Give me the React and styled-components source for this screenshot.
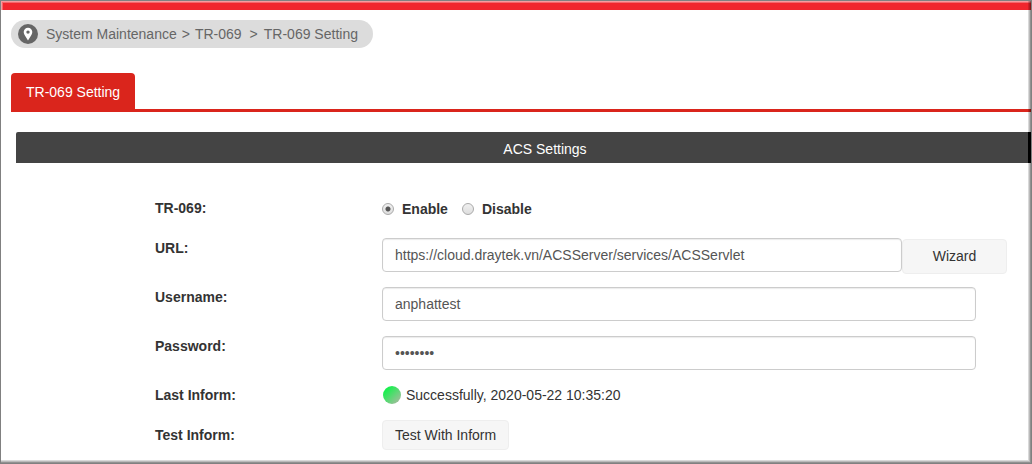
import React from "react";
import styled, { createGlobalStyle } from "styled-components";

const COLORS = {
  banner: "#f1262d",
  primary: "#da251c",
  heading: "#444444",
  crumb: "#dcdcdc",
  crumbText: "#666666",
  text: "#333333",
  fieldText: "#555555",
  border: "#cccccc",
  button: "#f6f6f6",
  buttonBorder: "#eeeeee",
};

const App = () => (
  <Window>
    <GlobalStyle />
    <Banner />
    <Content>
      <Breadcrumb aria-label="Breadcrumb">
        <PinIcon />
        <Crumb href="#maintenance">System Maintenance</Crumb>
        <Separator>&gt;</Separator>
        <Crumb href="#tr069">TR-069</Crumb>
        <Separator $wide>&gt;</Separator>
        <Crumb href="#setting">TR-069 Setting</Crumb>
      </Breadcrumb>

      <Tabs>
        <Tab type="button">TR-069 Setting</Tab>
      </Tabs>

      <Panel>
        <PanelTitle>ACS Settings</PanelTitle>
        <Form onSubmit={(event) => event.preventDefault()}>
          <RadioRow role="radiogroup" aria-labelledby="tr069-label">
            <Label as="span" id="tr069-label">
              TR-069:
            </Label>
            <RadioGroup>
              <RadioLabel>
                <Radio type="radio" name="tr069" defaultChecked />
                Enable
              </RadioLabel>
              <RadioLabel>
                <Radio type="radio" name="tr069" />
                Disable
              </RadioLabel>
            </RadioGroup>
          </RadioRow>

          <Row>
            <Label htmlFor="url">URL:</Label>
            <UrlGroup>
              <Input
                id="url"
                type="text"
                defaultValue="https://cloud.draytek.vn/ACSServer/services/ACSServlet"
              />
              <WizardButton type="button">Wizard</WizardButton>
            </UrlGroup>
          </Row>

          <Row>
            <Label htmlFor="username">Username:</Label>
            <Field>
              <Input id="username" type="text" defaultValue="anphattest" />
            </Field>
          </Row>

          <Row>
            <Label htmlFor="password">Password:</Label>
            <Field>
              <Input id="password" type="password" defaultValue="password" />
            </Field>
          </Row>

          <Row>
            <Label as="span">Last Inform:</Label>
            <Status>
              <StatusLight />
              Successfully, 2020-05-22 10:35:20
            </Status>
          </Row>

          <Row $align="center">
            <Label htmlFor="test-inform">Test Inform:</Label>
            <div>
              <TestButton id="test-inform" type="button">
                Test With Inform
              </TestButton>
            </div>
          </Row>
        </Form>
      </Panel>
    </Content>
    <Bevel />
  </Window>
);

const PinIcon = () => (
  <svg width="20" height="20" viewBox="0 0 20 20" aria-hidden="true">
    <circle cx="10" cy="10" r="10" fill="#666666" />
    <path
      fill="#ffffff"
      fillRule="evenodd"
      d="M10 3.8a4.300 4.300 0 0 0-4.300 4.300c0 1.100.4 2 .9 2.900L10 16.600l3.400-5.600c.5-.9.9-1.800.9-2.900A4.300 4.300 0 0 0 10 3.800Zm0 2.600a1.700 1.700 0 1 1 0 3.400 1.700 1.700 0 0 1 0-3.400Z"
    />
  </svg>
);

const GlobalStyle = createGlobalStyle`
  * {
    box-sizing: border-box;
  }

  body {
    margin: 0;
    background-color: #ffffff;
    color: ${COLORS.text};
    font-family: "Liberation Sans", Arial, sans-serif;
    font-size: 14px;
    line-height: 20px;
  }
`;

const Window = styled.div`
  position: relative;
  min-height: 100vh;
  padding: 1px 1px 4px;
  overflow: hidden;
`;

/* raised edge drawn over the whole page */
const Bevel = styled.div`
  position: absolute;
  inset: 0;
  pointer-events: none;
  border: 1px solid #808080;
  box-shadow:
    inset -1px -1px 0 rgba(0, 0, 0, 0.22),
    inset -2px -2px 0 rgba(0, 0, 0, 0.14),
    inset -3px -3px 0 rgba(0, 0, 0, 0.15),
    inset 1px 1px 0 rgba(255, 255, 255, 0.35),
    inset 2px 2px 0 rgba(255, 255, 255, 0.3);
`;

const Banner = styled.div`
  height: 9px;
  background-color: ${COLORS.banner};
`;

const Content = styled.main`
  padding: 10px 0 10px 10px;
`;

const Breadcrumb = styled.nav`
  display: flex;
  align-items: center;
  width: fit-content;
  height: 28px;
  padding: 0 15px 0 7px;
  border-radius: 14px;
  background-color: ${COLORS.crumb};
  color: ${COLORS.crumbText};

  svg {
    margin-right: 8px;
  }
`;

const Crumb = styled.a`
  color: inherit;
  text-decoration: none;
`;

const Separator = styled.span`
  margin: ${(props) => (props.$wide ? "0 6px 0 8px" : "0 5px")};
`;

const Tabs = styled.div`
  display: flex;
  margin-top: 25px;
  border-bottom: 3px solid ${COLORS.primary};
`;

const Tab = styled.button`
  height: 36px;
  padding: 2px 15px 0;
  border: 0;
  border-radius: 4px 4px 0 0;
  background-color: ${COLORS.primary};
  color: #ffffff;
  font: inherit;
`;

const Panel = styled.section`
  margin: 20px 0 0 5px;
`;

const PanelTitle = styled.h2`
  margin: 0;
  padding: 7px 0 4px 46px;
  border-right: 3px solid #000000;
  border-radius: 2px 0 0 0;
  background-color: ${COLORS.heading};
  color: #ffffff;
  font-size: 14px;
  font-weight: normal;
  text-align: center;
`;

const Form = styled.form`
  display: flex;
  flex-direction: column;
  gap: 15px;
  padding: 35px 24px 0 139px;
`;

const Row = styled.div`
  display: grid;
  grid-template-columns: 227px 1fr;
  align-items: ${(props) => props.$align || "start"};
`;

const RadioRow = styled(Row)`
  min-height: 25px;
`;

const Label = styled.label`
  font-weight: bold;
`;

const RadioGroup = styled.div`
  display: flex;
  gap: 14px;
  padding-top: 1px;
`;

const RadioLabel = styled.label`
  display: flex;
  align-items: center;
  gap: 8px;
  font-weight: bold;
`;

const Radio = styled.input`
  appearance: none;
  width: 12px;
  height: 12px;
  margin: 0;
  border: 1px solid #aaaaaa;
  border-radius: 50%;
  background: linear-gradient(#f0f0f0, #dedede);

  &:checked {
    background:
      radial-gradient(circle, #555555 2px, transparent 3px),
      linear-gradient(#f0f0f0, #dedede);
  }
`;

const UrlGroup = styled.div`
  display: flex;
`;

const Field = styled.div`
  padding-right: 31px;
`;

const Input = styled.input`
  display: block;
  width: 100%;
  min-width: 0;
  height: 34px;
  padding: 6px 12px;
  border: 1px solid ${COLORS.border};
  border-radius: 4px;
  background-color: #ffffff;
  box-shadow: inset 0 1px 1px rgba(0, 0, 0, 0.08);
  color: ${COLORS.fieldText};
  font: inherit;
`;

const Button = styled.button`
  border: 1px solid ${COLORS.buttonBorder};
  border-radius: 4px;
  background-color: ${COLORS.button};
  color: ${COLORS.text};
  font: inherit;
`;

const WizardButton = styled(Button)`
  flex: none;
  width: 105px;
  height: 35px;
  margin: 1px 0 -2px;
  padding: 0 0 2px;
`;

const TestButton = styled(Button)`
  display: block;
  height: 30px;
  padding: 0 12px;
`;

const Status = styled.div`
  display: flex;
  align-items: center;
  gap: 5px;
`;

const StatusLight = styled.span`
  width: 18px;
  height: 18px;
  margin-left: 1px;
  border-radius: 50%;
  background: linear-gradient(135deg, #19f04f 20%, #a3bd9d 90%);
`;

export default App;
